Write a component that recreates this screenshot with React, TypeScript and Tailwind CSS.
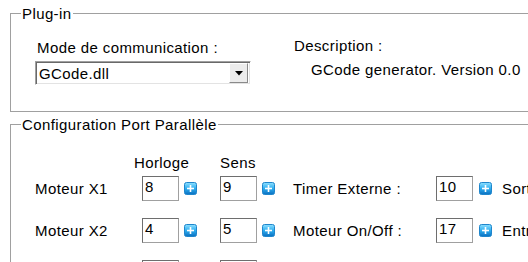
import { ReactNode } from "react"

function PlusIcon() {
    return (
        <svg width="13" height="13" viewBox="0 0 13 13" className="block">
            <defs>
                <linearGradient id="plusGrad" x1="0" y1="0" x2="0" y2="1">
                    <stop offset="0" stopColor="#8fe0ff" />
                    <stop offset="0.5" stopColor="#2eaef0" />
                    <stop offset="1" stopColor="#0a6fc0" />
                </linearGradient>
            </defs>
            <rect x="0.5" y="0.5" width="12" height="12" rx="2" fill="url(#plusGrad)" stroke="#1f86cc" />
            <rect x="3" y="5.7" width="7" height="1.6" fill="#fff" />
            <rect x="5.7" y="3" width="1.6" height="7" fill="#fff" />
        </svg>
    )
}

function NumBox({ value }: { value: string }) {
    return (
        <div className="w-[37px] h-[25px] bg-white border border-t-[#6e6e6e] border-l-[#6e6e6e] border-r-[#a0a0a0] border-b-[#a0a0a0] pl-[2px] leading-[17px] pt-[1px]">
            {value}
        </div>
    )
}

function Row({ label, a, b, c, d, e }: { label?: string; a: string; b: string; c?: string; d?: string; e?: string }) {
    return (
        <div className="grid grid-cols-[107px_37px_41px_37px_36px_143px_37px_29px_120px] items-center h-[25px]">
            <span>{label}</span>
            <NumBox value={a} />
            <span className="pl-[5px]"><PlusIcon /></span>
            <NumBox value={b} />
            <span className="pl-[5px]"><PlusIcon /></span>
            <span>{c}</span>
            {d ? <NumBox value={d} /> : <span />}
            {d ? <span className="pl-[6px]"><PlusIcon /></span> : <span />}
            <span className="whitespace-nowrap">{e}</span>
        </div>
    )
}

function GroupBox({ title, className, children }: { title: string; className?: string; children: ReactNode }) {
    return (
        <fieldset className={"ml-[10px] w-[560px] border border-[#a0a0a0] " + (className ?? "")}>
            <legend className="ml-[10px] px-[1px] leading-[17px]">{title}</legend>
            {children}
        </fieldset>
    )
}

export default function App() {
    return (
        <div className="w-[528px] h-[262px] overflow-hidden bg-white text-black text-[15px] leading-[17px] tracking-[0.4px] font-['Liberation_Sans',Arial,sans-serif]">
            <GroupBox title="Plug-in" className="mt-[5px] h-[107px]">
                <div className="flex">
                    <div className="ml-[24px] pt-[17px] w-[259px]">
                        <div className="ml-[2px]">Mode de communication :</div>
                        <div className="mt-[5px] w-[216px] h-[24px] flex items-center border border-t-[#a0a0a0] border-l-[#a0a0a0] border-r-white border-b-white shadow-[inset_1px_1px_0_#696969,inset_-1px_-1px_0_#e3e3e3] bg-white">
                            <span className="flex-1 pl-[3px]">GCode.dll</span>
                            <span className="w-[19px] h-[20px] mr-[2px] flex items-center justify-center bg-[#ececec] border border-t-white border-l-white border-r-[#8a8a8a] border-b-[#8a8a8a]">
                                <svg width="8" height="5" viewBox="0 0 8 5"><path d="M0 0h8L4 4.5z" fill="#000" /></svg>
                            </span>
                        </div>
                    </div>
                    <div className="pt-[15px]">
                        <div>Description :</div>
                        <div className="mt-[7px] ml-[17px]">GCode generator. Version 0.0</div>
                    </div>
                </div>
            </GroupBox>
            <GroupBox title="Configuration Port Parallèle" className="mt-[4px] h-[200px]">
                <div className="pl-[24px] pt-[21px]">
                    <div className="flex">
                        <span className="ml-[99px] w-[86px]">Horloge</span>
                        <span>Sens</span>
                    </div>
                    <div className="mt-[5px] flex flex-col gap-[17px]">
                        <Row label="Moteur X1" a="8" b="9" c="Timer Externe :" d="10" e="Sortie" />
                        <Row label="Moteur X2" a="4" b="5" c="Moteur On/Off :" d="17" e="Entrée" />
                        <Row a="" b="" />
                    </div>
                </div>
            </GroupBox>
        </div>
    )
}
